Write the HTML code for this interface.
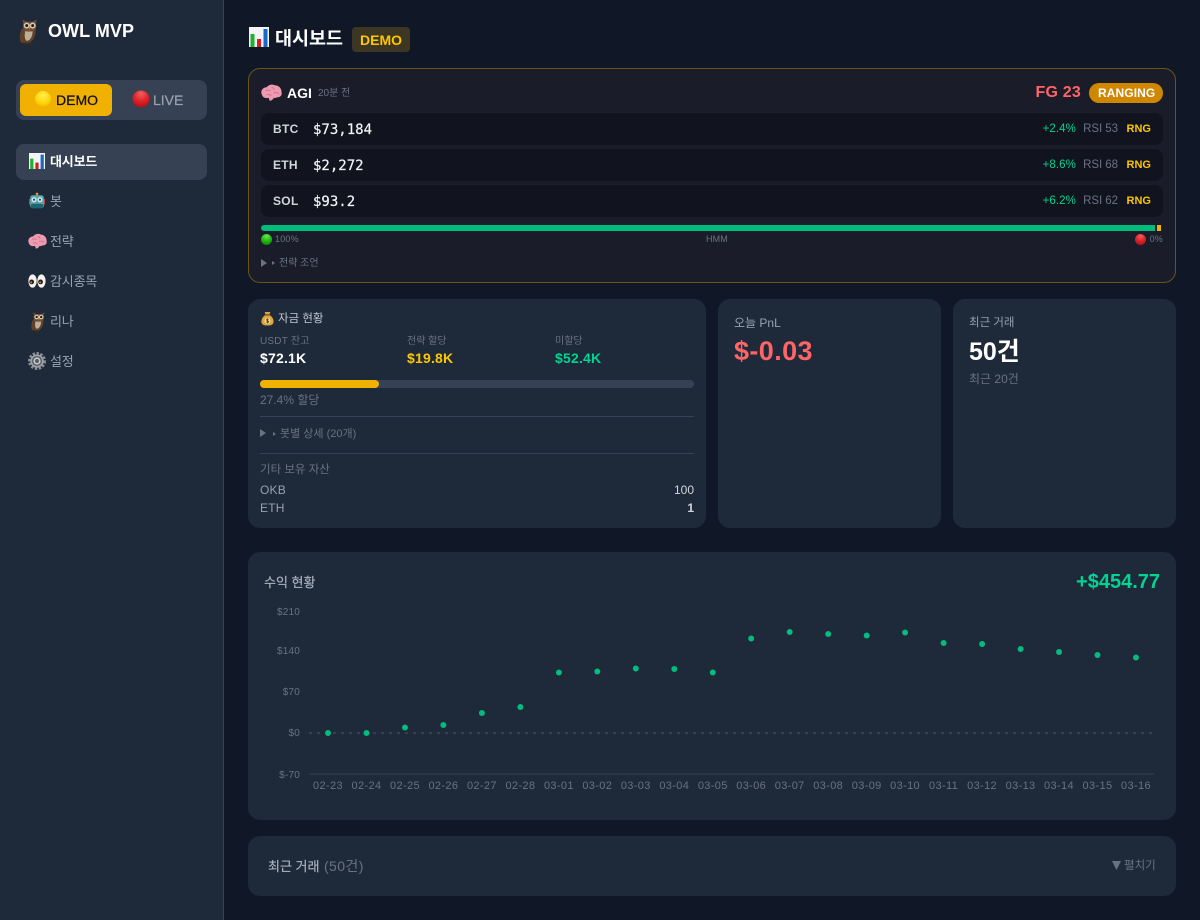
<!DOCTYPE html>
<html lang="ko"><head><meta charset="utf-8"><title>OWL MVP</title>
<style>
*{box-sizing:border-box;margin:0;padding:0}
html,body{width:1200px;height:920px;overflow:hidden;background:#101828;font-family:"Liberation Sans","Noto Sans CJK KR",sans-serif;color:#fff}
.a{position:absolute}
.t{position:absolute;white-space:nowrap;line-height:1}
.r{position:absolute;white-space:nowrap;line-height:1;text-align:right}
.b{font-weight:700}
.m{font-family:"DejaVu Sans Mono","Liberation Mono",monospace;-webkit-text-stroke:.2px #f3f4f6}
.card{position:absolute;background:#1e2939;border-radius:12px}
.row{position:absolute;left:261px;width:902px;height:32px;background:#11141f;border-radius:8px}
svg.e{position:absolute;display:block}
</style></head><body>
<svg width="0" height="0" style="position:absolute">
<defs>
<symbol id="owl" viewBox="0 0 20 25">
<path d="M4 9C1 14 1 20 3 23h8c5-3 6-9 6-14z" fill="#5f422c"/>
<path d="M7 11c-1 4-1 8 1 10 4 0 6-5 6-10z" fill="#bfae98"/>
<path d="M5 4 4 0.500 8 2.500h6l4-2-1 4c1 3 0 6-3 7.500H8C5 11 4 7 5 4z" fill="#6e4e35"/>
<circle cx="8.300" cy="6.300" r="2.900" fill="#d9c8ae"/><circle cx="14" cy="6.300" r="2.900" fill="#d9c8ae"/>
<circle cx="8.300" cy="6.300" r="1.400" fill="#1c140e"/><circle cx="14" cy="6.300" r="1.400" fill="#1c140e"/>
<path d="m10.300 8 .9 2.200.9-2.200z" fill="#c98a2e"/><path d="M5 23h8v1.500H5z" fill="#3d2a1a"/>
</symbol>
<symbol id="chart" viewBox="0 0 20 20">
<rect width="20" height="20" fill="#f2f4f5"/><rect x="1.500" y="7" width="4" height="13" fill="#1fb12d"/><rect x="8" y="12" width="4" height="8" fill="#d3201f"/><rect x="14.500" y="2" width="4" height="18" fill="#1767c8"/>
</symbol>
<symbol id="robot" viewBox="0 0 20 20">
<circle cx="10" cy="1.800" r="1.700" fill="#e8942c"/><rect x="0" y="8" width="3" height="7" fill="#c4453c"/><rect x="17" y="8" width="3" height="7" fill="#c4453c"/>
<rect x="1.500" y="3.500" width="17" height="16" rx="3" fill="#5aa9b3"/><rect x="2.500" y="14" width="15" height="5.500" rx="1.500" fill="#1d6570"/>
<circle cx="6.300" cy="9" r="3.200" fill="#c4ecf0"/><circle cx="13.700" cy="9" r="3.200" fill="#c4ecf0"/><circle cx="6.300" cy="9" r="1.300" fill="#263c48"/><circle cx="13.700" cy="9" r="1.300" fill="#263c48"/><circle cx="10" cy="12.500" r="1" fill="#d9534f"/>
</symbol>
<symbol id="brain" viewBox="0 0 22 18">
<path d="M1 11C-1 7 2 3 6 3c2-3 6-3.500 9-2 4 0 7 4 6.500 7.500 1 3-2 5.500-5 5-1 1-2 1-3 .5-1 2-3 3.500-4.500 3l-1-3C5 15 2 14 1 11z" fill="#ee9bb0"/>
<path d="M5 7c2-2 4-1 5 0m1-4c2 0 3 2 3 3m-8 5c2-1 4 0 5 1m2-3c2-1 5 0 6 1" stroke="#c76f8d" stroke-width=".9" fill="none"/>
</symbol>
<symbol id="eyes" viewBox="0 0 20 18">
<ellipse cx="5" cy="9" rx="4.700" ry="7.500" fill="#f4f2ef"/><ellipse cx="15" cy="9" rx="4.700" ry="7.500" fill="#f4f2ef"/>
<circle cx="4" cy="10" r="2.700" fill="#2a1c10"/><circle cx="14" cy="10" r="2.700" fill="#2a1c10"/><circle cx="3.500" cy="10.500" r="1.100" fill="#c98a2e"/><circle cx="13.500" cy="10.500" r="1.100" fill="#c98a2e"/>
</symbol>
<symbol id="gear" viewBox="0 0 20 20">
<circle cx="10" cy="10" r="8.300" fill="none" stroke="#8b8f96" stroke-width="3.400" stroke-dasharray="2.600 1.660"/>
<circle cx="10" cy="10" r="7.400" fill="#9da1a8"/><circle cx="10" cy="10" r="5.600" fill="#5b5f66"/><circle cx="10" cy="10" r="4" fill="#c8cbcf"/><circle cx="10" cy="10" r="2.300" fill="#5a5e65"/>
</symbol>
<symbol id="bag" viewBox="0 0 14 16">
<path d="M4 1h6L9 4c3 2 5 5 4.500 8-.5 3-3 3.500-6.500 3.500S1 15 .5 12C0 9 2 6 5 4z" fill="#dca63e"/><rect x="4" y="3.400" width="6" height="1.400" fill="#7d4a22"/>
<circle cx="7" cy="10.500" r="3.300" fill="#f1d98c"/><path d="M8.200 9c-1.500-.9-3-.1-2 1 .9.7 2.700.6 2 1.700-.7.800-2 .400-2.700-.1M7 7.800v5.400" stroke="#5a4018" stroke-width=".9" fill="none"/>
</symbol>
<radialGradient id="gy" cx=".5" cy=".3" r=".75"><stop offset="0" stop-color="#ffee55"/><stop offset=".6" stop-color="#ffd60a"/><stop offset="1" stop-color="#eeb000"/></radialGradient>
<radialGradient id="gr" cx=".5" cy=".2" r=".85"><stop offset="0" stop-color="#f2605c"/><stop offset=".5" stop-color="#e0242a"/><stop offset="1" stop-color="#a50f14"/></radialGradient>
<radialGradient id="gg" cx=".5" cy=".2" r=".85"><stop offset="0" stop-color="#66e656"/><stop offset=".55" stop-color="#22b80f"/><stop offset="1" stop-color="#0e7d08"/></radialGradient>
</defs>
</svg>

<!-- Sidebar -->
<div class="a" style="left:0;top:0;width:224px;height:920px;background:#1e2939;border-right:1px solid #364153"></div>
<svg class="e" style="left:18px;top:19px" width="21" height="26"><use href="#owl"/></svg>
<div class="t b" style="left:48px;top:22px;font-size:18px;letter-spacing:.05px">OWL MVP</div>
<div class="a" style="left:16px;top:80px;width:191px;height:40px;background:#364153;border-radius:8px"></div>
<div class="a" style="left:20px;top:84px;width:92px;height:32px;background:#f0b100;border-radius:6px"></div>
<svg class="e" style="left:35px;top:91px" width="16" height="16"><circle cx="8" cy="8" r="8" fill="url(#gy)"/></svg>
<div class="t" style="left:56px;top:93px;font-size:14px;color:#101010;-webkit-text-stroke:.25px #101010">DEMO</div>
<svg class="e" style="left:132px;top:90px" width="18" height="18"><circle cx="9" cy="9" r="8.500" fill="url(#gr)"/></svg>
<div class="t" style="left:153px;top:93px;font-size:14px;color:#99a1af;-webkit-text-stroke:.25px #99a1af">LIVE</div>

<div class="a" style="left:16px;top:144px;width:191px;height:36px;background:#364153;border-radius:8px"></div>
<svg class="e" style="left:29px;top:152px" width="16" height="18"><use href="#chart"/></svg>
<div class="t b" style="left:50px;top:155px;font-size:13px;letter-spacing:-.15px">대시보드</div>
<svg class="e" style="left:29px;top:192px" width="16" height="17"><use href="#robot"/></svg>
<div class="t" style="left:50px;top:195px;font-size:13px;color:#99a1af;letter-spacing:-.15px">봇</div>
<svg class="e" style="left:28px;top:233px" width="19" height="17"><use href="#brain"/></svg>
<div class="t" style="left:50px;top:235px;font-size:13px;color:#99a1af;letter-spacing:-.15px">전략</div>
<svg class="e" style="left:28px;top:273px" width="18" height="16"><use href="#eyes"/></svg>
<div class="t" style="left:50px;top:275px;font-size:13px;color:#99a1af;letter-spacing:-.15px">감시종목</div>
<svg class="e" style="left:30px;top:312px" width="16" height="20"><use href="#owl"/></svg>
<div class="t" style="left:50px;top:315px;font-size:13px;color:#99a1af;letter-spacing:-.15px">리나</div>
<svg class="e" style="left:28px;top:352px" width="18" height="18"><use href="#gear"/></svg>
<div class="t" style="left:50px;top:355px;font-size:13px;color:#99a1af;letter-spacing:-.15px">설정</div>

<!-- Header -->
<svg class="e" style="left:249px;top:26px" width="20" height="22"><use href="#chart"/></svg>
<div class="t b" style="left:275px;top:30px;font-size:18.500px">대시보드</div>
<div class="a" style="left:352px;top:27px;width:58px;height:25px;background:#3d3622;border-radius:4px"></div>
<div class="t b" style="left:360px;top:33px;font-size:14px;color:#fdc700">DEMO</div>

<!-- AGI card -->
<div class="a" style="left:248px;top:68px;width:928px;height:215px;background:#1a1d29;border:1px solid #6b5318;border-radius:12px"></div>
<svg class="e" style="left:261px;top:84px" width="21" height="18"><use href="#brain"/></svg>
<div class="t b" style="left:287px;top:86px;font-size:14px">AGI</div>
<div class="t" style="left:318px;top:89px;font-size:10px;color:#6a7282">20분 전</div>
<div class="r b" style="right:119px;top:85px;font-size:16px;color:#ff6467;letter-spacing:.2px">FG 23</div>
<div class="a" style="left:1089px;top:83px;width:74px;height:20px;background:#d08700;border-radius:10px"></div>
<div class="t b" style="left:1098px;top:87px;font-size:12px;letter-spacing:.1px">RANGING</div>

<div class="row" style="top:113px"></div>
<div class="row" style="top:149px"></div>
<div class="row" style="top:185px"></div>

<div class="t b" style="left:273px;top:123px;font-size:12px;color:#d1d5dc;letter-spacing:.3px">BTC</div>
<div class="t m" style="left:313px;top:123px;font-size:14px;color:#f3f4f6">$73,184</div>
<div class="r" style="right:124px;top:124px;font-size:11.500px;color:#00d492;letter-spacing:.1px">+2.4%</div>
<div class="r" style="right:82px;top:124px;font-size:11.500px;color:#6a7282;letter-spacing:-.05px">RSI 53</div>
<div class="r b" style="right:49px;top:124px;font-size:11px;color:#fdc700">RNG</div>

<div class="t b" style="left:273px;top:159px;font-size:12px;color:#d1d5dc;letter-spacing:.3px">ETH</div>
<div class="t m" style="left:313px;top:159px;font-size:14px;color:#f3f4f6">$2,272</div>
<div class="r" style="right:124px;top:160px;font-size:11.500px;color:#00d492;letter-spacing:.1px">+8.6%</div>
<div class="r" style="right:82px;top:160px;font-size:11.500px;color:#6a7282;letter-spacing:-.05px">RSI 68</div>
<div class="r b" style="right:49px;top:160px;font-size:11px;color:#fdc700">RNG</div>

<div class="t b" style="left:273px;top:195px;font-size:12px;color:#d1d5dc;letter-spacing:.3px">SOL</div>
<div class="t m" style="left:313px;top:195px;font-size:14px;color:#f3f4f6">$93.2</div>
<div class="r" style="right:124px;top:196px;font-size:11.500px;color:#00d492;letter-spacing:.1px">+6.2%</div>
<div class="r" style="right:82px;top:196px;font-size:11.500px;color:#6a7282;letter-spacing:-.05px">RSI 62</div>
<div class="r b" style="right:49px;top:196px;font-size:11px;color:#fdc700">RNG</div>

<div class="a" style="left:261px;top:225px;width:894px;height:6px;background:#00bc7d;border-radius:3px 0 0 3px"></div>
<div class="a" style="left:1157px;top:225px;width:4px;height:6px;background:#f0b100"></div>
<svg class="e" style="left:261px;top:234px" width="11" height="11"><circle cx="5.500" cy="5.500" r="5.500" fill="url(#gg)"/></svg>
<div class="t" style="left:275px;top:235px;font-size:9px;color:#6a7282;letter-spacing:.2px">100%</div>
<div class="t" style="left:706px;top:235px;font-size:9px;color:#6a7282;letter-spacing:.1px">HMM</div>
<svg class="e" style="left:1135px;top:234px" width="11" height="11"><circle cx="5.500" cy="5.500" r="5.500" fill="url(#gr)"/></svg>
<div class="r" style="right:37px;top:235px;font-size:9px;color:#6a7282;letter-spacing:.2px">0%</div>
<svg class="e" style="left:261px;top:259px" width="6" height="8"><path d="M0 0 6 4 0 8z" fill="#6a7282"/></svg>
<svg class="e" style="left:272px;top:261px" width="3" height="4"><path d="M0 0 3 2 0 4z" fill="#6a7282"/></svg>
<div class="t" style="left:279px;top:259px;font-size:10px;color:#6a7282">전략 조언</div>

<!-- Funds card -->
<div class="card" style="left:248px;top:299px;width:458px;height:229px"></div>
<svg class="e" style="left:261px;top:311px" width="13" height="15"><use href="#bag"/></svg>
<div class="t" style="left:278px;top:314px;font-size:11.500px;color:#c2c8d2">자금 현황</div>
<div class="t" style="left:260px;top:337px;font-size:10px;color:#6a7282;letter-spacing:.2px">USDT 잔고</div>
<div class="t b" style="left:260px;top:351px;font-size:14px;letter-spacing:.2px">$72.1K</div>
<div class="t" style="left:407px;top:337px;font-size:10px;color:#6a7282">전략 할당</div>
<div class="t b" style="left:407px;top:351px;font-size:14px;color:#fdc700;letter-spacing:.2px">$19.8K</div>
<div class="t" style="left:555px;top:337px;font-size:10px;color:#6a7282">미할당</div>
<div class="t b" style="left:555px;top:351px;font-size:14px;color:#00d492;letter-spacing:.2px">$52.4K</div>
<div class="a" style="left:260px;top:380px;width:434px;height:8px;background:#364153;border-radius:4px"></div>
<div class="a" style="left:260px;top:380px;width:119px;height:8px;background:#f0b100;border-radius:4px"></div>
<div class="t" style="left:260px;top:394px;font-size:12px;color:#6a7282">27.4% 할당</div>
<div class="a" style="left:260px;top:416px;width:434px;height:1px;background:#364153"></div>
<svg class="e" style="left:260px;top:429px" width="6" height="8"><path d="M0 0 6 4 0 8z" fill="#6a7282"/></svg>
<svg class="e" style="left:273px;top:432px" width="3" height="4"><path d="M0 0 3 2 0 4z" fill="#6a7282"/></svg>
<div class="t" style="left:280px;top:429px;font-size:11px;color:#6a7282">봇별 상세 (20개)</div>
<div class="a" style="left:260px;top:453px;width:434px;height:1px;background:#364153"></div>
<div class="t" style="left:260px;top:465px;font-size:11.500px;color:#6a7282">기타 보유 자산</div>
<div class="t" style="left:260px;top:484px;font-size:12px;color:#99a1af;letter-spacing:.2px">OKB</div>
<div class="r" style="right:506px;top:484px;font-size:12px;color:#d1d5dc">100</div>
<div class="t" style="left:260px;top:502px;font-size:12px;color:#99a1af;letter-spacing:.2px">ETH</div>
<div class="r b" style="right:506px;top:502px;font-size:12px;color:#d1d5dc">1</div>

<!-- PnL -->
<div class="card" style="left:718px;top:299px;width:223px;height:229px"></div>
<div class="t" style="left:734px;top:317px;font-size:12px;color:#99a1af">오늘 PnL</div>
<div class="t b" style="left:734px;top:338px;font-size:27px;color:#ff6467;letter-spacing:.4px">$-0.03</div>

<!-- Trades -->
<div class="card" style="left:953px;top:299px;width:223px;height:229px"></div>
<div class="t" style="left:969px;top:318px;font-size:11.500px;color:#99a1af">최근 거래</div>
<div class="t b" style="left:969px;top:340px;font-size:25px">50건</div>
<div class="t" style="left:969px;top:373px;font-size:12px;color:#6a7282">최근 20건</div>

<!-- Chart card -->
<div class="card" style="left:248px;top:552px;width:928px;height:268px"></div>
<div class="t b" style="left:264px;top:576px;font-size:13px;color:#a9b0bc;-webkit-text-stroke:.2px #a9b0bc;font-weight:400">수익 현황</div>
<div class="r b" style="right:40px;top:572px;font-size:20px;color:#00d492">+$454.77</div>
<svg class="a" style="left:248px;top:552px" width="928" height="268" viewBox="248 552 928 268">
<line x1="309" y1="733" x2="1154" y2="733" stroke="#4a5565" stroke-width="1" stroke-dasharray="3 5"/>
<line x1="309" y1="774" x2="1154" y2="774" stroke="#364153" stroke-width="1"/>
<g fill="#6a7282" font-size="10" font-family="'Liberation Sans',sans-serif" text-anchor="end" letter-spacing=".2">
<text x="300" y="615">$210</text><text x="300" y="654">$140</text><text x="300" y="695">$70</text><text x="300" y="736">$0</text><text x="300" y="778">$-70</text>
</g>
<g fill="#6a7282" font-size="11" font-family="'Liberation Sans',sans-serif" text-anchor="middle" letter-spacing=".35">
<text x="328" y="789">02-23</text><text x="366.500" y="789">02-24</text><text x="405" y="789">02-25</text><text x="443.400" y="789">02-26</text><text x="481.900" y="789">02-27</text><text x="520.400" y="789">02-28</text><text x="558.900" y="789">03-01</text><text x="597.300" y="789">03-02</text><text x="635.800" y="789">03-03</text><text x="674.300" y="789">03-04</text><text x="712.800" y="789">03-05</text><text x="751.200" y="789">03-06</text><text x="789.700" y="789">03-07</text><text x="828.200" y="789">03-08</text><text x="866.700" y="789">03-09</text><text x="905.100" y="789">03-10</text><text x="943.600" y="789">03-11</text><text x="982.100" y="789">03-12</text><text x="1020.600" y="789">03-13</text><text x="1059" y="789">03-14</text><text x="1097.500" y="789">03-15</text><text x="1136" y="789">03-16</text>
</g>
<g fill="#00bc7d">
<circle cx="328" cy="733" r="3"/><circle cx="366.500" cy="733" r="3"/><circle cx="405" cy="727.500" r="3"/><circle cx="443.400" cy="725" r="3"/><circle cx="481.900" cy="713" r="3"/><circle cx="520.400" cy="707" r="3"/><circle cx="558.900" cy="672.500" r="3"/><circle cx="597.300" cy="671.500" r="3"/><circle cx="635.800" cy="668.500" r="3"/><circle cx="674.300" cy="669" r="3"/><circle cx="712.800" cy="672.500" r="3"/><circle cx="751.200" cy="638.500" r="3"/><circle cx="789.700" cy="632" r="3"/><circle cx="828.200" cy="634" r="3"/><circle cx="866.700" cy="635.500" r="3"/><circle cx="905.100" cy="632.500" r="3"/><circle cx="943.600" cy="643" r="3"/><circle cx="982.100" cy="644" r="3"/><circle cx="1020.600" cy="649" r="3"/><circle cx="1059" cy="652" r="3"/><circle cx="1097.500" cy="655" r="3"/><circle cx="1136" cy="657.500" r="3"/>
</g>
</svg>

<!-- Bottom card -->
<div class="card" style="left:248px;top:836px;width:928px;height:60px"></div>
<div class="t" style="left:268px;top:860px;font-size:13px;color:#a9b0bc;-webkit-text-stroke:.2px #a9b0bc">최근 거래</div>
<div class="t" style="left:324px;top:859px;font-size:14px;color:#6a7282;letter-spacing:.4px">(50건)</div>
<svg class="e" style="left:1112px;top:860px" width="9" height="10"><path d="M0 1h9L4.500 10z" fill="#6a7282"/></svg>
<div class="t" style="left:1124px;top:861px;font-size:11.500px;color:#6a7282">펼치기</div>
</body></html>
